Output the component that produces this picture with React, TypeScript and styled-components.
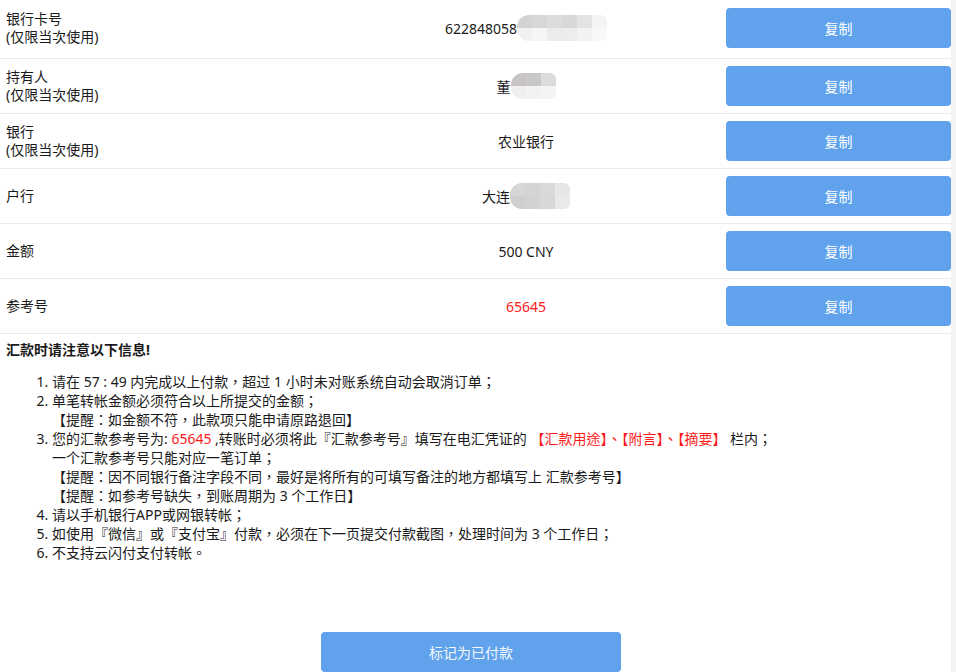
import styled, { createGlobalStyle } from 'styled-components';

const GlobalStyle = createGlobalStyle`
  html, body {
    margin: 0;
    padding: 0;
    background: #ffffff;
  }
  body {
    font-family: "Noto Sans", "Noto Sans CJK TC", sans-serif;
    font-size: 14px;
    color: #1a1a1a;
    overflow: hidden;
  }
`;

const COLORS = {
  BLUE: '#60a2eb',
  BORDER: '#ececec',
  RED: '#ff1a1a',
  GUTTER: '#f3f3f3',
};

const Page = styled.div`
  display: flex;
  width: 956px;
  height: 672px;
  overflow: hidden;
`;

const Main = styled.div`
  width: 951px;
  flex-shrink: 0;
`;

const Gutter = styled.div`
  flex: 1;
  background: ${COLORS.GUTTER};
`;

const Row = styled.div`
  display: grid;
  grid-template-columns: 326px 400px 225px;
  align-items: center;
  height: 55px;
  box-sizing: border-box;
  border-bottom: 1px solid ${COLORS.BORDER};
  &:first-child {
    height: 59px;
    padding-bottom: 2px;
  }
`;

const Label = styled.div`
  padding-left: 6px;
  line-height: 18px;
`;

const Value = styled.div<{ $red?: boolean }>`
  display: flex;
  justify-content: center;
  align-items: center;
  color: ${({ $red }) => ($red ? COLORS.RED : 'inherit')};
  line-height: 19px;
`;

const CopyButton = styled.button`
  display: block;
  height: 40px;
  width: 225px;
  border: none;
  border-radius: 4px;
  background: ${COLORS.BLUE};
  color: #ffffff;
  font-family: inherit;
  font-size: 14px;
  cursor: pointer;
`;

const Mosaic = styled.span<{ $cols: number }>`
  display: inline-grid;
  grid-template-columns: repeat(${({ $cols }) => $cols}, 15px);
  grid-auto-rows: 13px;
  border-radius: 12px 6px 6px 12px;
  overflow: hidden;
  filter: blur(0.6px);
`;

const Cell = styled.span<{ $c: string }>`
  background: ${({ $c }) => $c};
`;

const Notice = styled.div`
  padding: 6px 6px 0;
`;

const Heading = styled.div`
  font-weight: bold;
  line-height: 19px;
`;

const List = styled.ol`
  margin: 13px 0 0;
  padding-left: 46px;
  line-height: 19px;
`;

const Sub = styled.div``;

const Red = styled.span`
  color: ${COLORS.RED};
`;

const Footer = styled.div`
  display: flex;
  justify-content: center;
  padding: 70px 9px 0 0;
`;

const PaidButton = styled.button`
  width: 300px;
  height: 40px;
  border: none;
  border-radius: 4px;
  background: ${COLORS.BLUE};
  color: #f4f8fd;
  font-family: inherit;
  font-size: 14px;
`;

const blur = (cells: string[][]) => (
  <Mosaic $cols={cells[0].length}>
    {cells.flat().map((c, i) => (
      <Cell key={i} $c={c} />
    ))}
  </Mosaic>
);

const rows: { label: string[]; value: React.ReactNode; red?: boolean }[] = [
  {
    label: ['银行卡号', '(仅限当次使用)'],
    value: (
      <>
        622848058
        {blur([
          ['#d3d3d3', '#d7d7d7', '#dcdcdc', '#d8d8d8', '#e3e3e3', '#f4f4f4'],
          ['#f0f0f0', '#f6f6f6', '#ebebeb', '#ededed', '#f2f2f2', '#f8f8f8'],
        ])}
      </>
    ),
  },
  {
    label: ['持有人', '(仅限当次使用)'],
    value: (
      <>
        董
        {blur([
          ['#c8c4c4', '#c9c7c7', '#dcdcdf'],
          ['#efefef', '#f2f2f2', '#f4f4f4'],
        ])}
      </>
    ),
  },
  { label: ['银行', '(仅限当次使用)'], value: '农业银行' },
  {
    label: ['户行'],
    value: (
      <>
        大连
        {blur([
          ['#d6d6d6', '#d4d4d4', '#d9d9d9', '#e6e6e6'],
          ['#cfcfcf', '#d2d2d2', '#d8d8d8', '#e9e9ec'],
        ])}
      </>
    ),
  },
  { label: ['金额'], value: '500 CNY' },
  { label: ['参考号'], value: '65645', red: true },
];

export default function App() {
  return (
    <Page>
      <GlobalStyle />
      <Main>
        {rows.map((r, i) => (
          <Row key={i}>
            <Label>
              {r.label.map((l) => (
                <div key={l}>{l}</div>
              ))}
            </Label>
            <Value $red={r.red}>{r.value}</Value>
            <div>
              <CopyButton>复制</CopyButton>
            </div>
          </Row>
        ))}
        <Notice>
          <Heading>汇款时请注意以下信息!</Heading>
          <List>
            <li>请在 57 : 49 内完成以上付款，超过 1 小时未对账系统自动会取消订单；</li>
            <li>
              单笔转帐金额必须符合以上所提交的金额；
              <Sub>【提醒：如金额不符，此款项只能申请原路退回】</Sub>
            </li>
            <li>
              您的汇款参考号为: <Red>65645</Red> ,转账时必须将此『汇款参考号』填写在电汇凭证的{' '}
              <Red>【汇款用途】、【附言】、【摘要】</Red> 栏内；
              <Sub>一个汇款参考号只能对应一笔订单；</Sub>
              <Sub>【提醒：因不同银行备注字段不同，最好是将所有的可填写备注的地方都填写上 汇款参考号】</Sub>
              <Sub>【提醒：如参考号缺失，到账周期为 3 个工作日】</Sub>
            </li>
            <li>请以手机银行APP或网银转帐；</li>
            <li>如使用『微信』或『支付宝』付款，必须在下一页提交付款截图，处理时间为 3 个工作日；</li>
            <li>不支持云闪付支付转帐。</li>
          </List>
        </Notice>
        <Footer>
          <PaidButton>标记为已付款</PaidButton>
        </Footer>
      </Main>
      <Gutter />
    </Page>
  );
}
